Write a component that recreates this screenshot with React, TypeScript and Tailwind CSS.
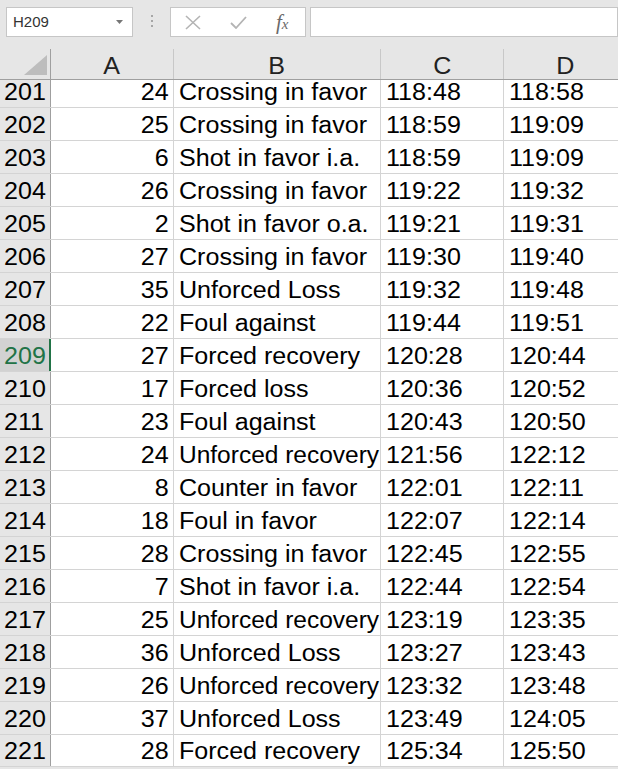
import React from "react";

type Row = { n: number; a: string; b: string; c: string; d: string };

const rows: Row[] = [
  { n: 201, a: "24", b: "Crossing in favor", c: "118:48", d: "118:58" },
  { n: 202, a: "25", b: "Crossing in favor", c: "118:59", d: "119:09" },
  { n: 203, a: "6", b: "Shot in favor i.a.", c: "118:59", d: "119:09" },
  { n: 204, a: "26", b: "Crossing in favor", c: "119:22", d: "119:32" },
  { n: 205, a: "2", b: "Shot in favor o.a.", c: "119:21", d: "119:31" },
  { n: 206, a: "27", b: "Crossing in favor", c: "119:30", d: "119:40" },
  { n: 207, a: "35", b: "Unforced Loss", c: "119:32", d: "119:48" },
  { n: 208, a: "22", b: "Foul against", c: "119:44", d: "119:51" },
  { n: 209, a: "27", b: "Forced recovery", c: "120:28", d: "120:44" },
  { n: 210, a: "17", b: "Forced loss", c: "120:36", d: "120:52" },
  { n: 211, a: "23", b: "Foul against", c: "120:43", d: "120:50" },
  { n: 212, a: "24", b: "Unforced recovery", c: "121:56", d: "122:12" },
  { n: 213, a: "8", b: "Counter in favor", c: "122:01", d: "122:11" },
  { n: 214, a: "18", b: "Foul in favor", c: "122:07", d: "122:14" },
  { n: 215, a: "28", b: "Crossing in favor", c: "122:45", d: "122:55" },
  { n: 216, a: "7", b: "Shot in favor i.a.", c: "122:44", d: "122:54" },
  { n: 217, a: "25", b: "Unforced recovery", c: "123:19", d: "123:35" },
  { n: 218, a: "36", b: "Unforced Loss", c: "123:27", d: "123:43" },
  { n: 219, a: "26", b: "Unforced recovery", c: "123:32", d: "123:48" },
  { n: 220, a: "37", b: "Unforced Loss", c: "123:49", d: "124:05" },
  { n: 221, a: "28", b: "Forced recovery", c: "125:34", d: "125:50" },
];

const ACTIVE_ROW = 209;

function Txt({
  children,
  origin = "left",
  tight = false,
}: {
  children: React.ReactNode;
  origin?: "left" | "right" | "center";
  tight?: boolean;
}) {
  const o = origin === "left" ? "origin-left" : origin === "right" ? "origin-right" : "origin-center";
  const s = tight ? "scale-x-[1.065]" : "scale-x-[1.09]";
  return <span className={`inline-block whitespace-nowrap ${s} ${o}`}>{children}</span>;
}

function FormulaBar() {
  return (
    <div className="flex h-[49px] items-start bg-[#e6e6e6] pt-[7px]">
      {/* name box */}
      <div className="ml-[6px] flex h-[30px] w-[127px] items-center justify-between border border-[#c6c6c6] bg-white pl-[6px] pr-[9px]">
        <span className="text-[15px] text-[#333]">H209</span>
        <svg width="7" height="4" viewBox="0 0 7 4">
          <path d="M0 0 L7 0 L3.5 4 Z" fill="#767676" />
        </svg>
      </div>
      {/* grip dots */}
      <div className="flex w-[37px] flex-col items-center gap-[3px] pt-[8px]">
        <span className="h-[2px] w-[2px] bg-[#a6a6a6]" />
        <span className="h-[2px] w-[2px] bg-[#a6a6a6]" />
        <span className="h-[2px] w-[2px] bg-[#a6a6a6]" />
      </div>
      {/* cancel / enter / function buttons */}
      <div className="flex h-[30px] w-[136px] items-center border border-[#c6c6c6] bg-white">
        <svg className="ml-[14px]" width="16" height="15" viewBox="0 0 16 15">
          <path d="M1 1 L15 14 M15 1 L1 14" stroke="#b4b4b4" strokeWidth="1.6" fill="none" />
        </svg>
        <svg className="ml-[29px]" width="17" height="13" viewBox="0 0 17 13">
          <path d="M1 7 L6 12 L16 1" stroke="#b4b4b4" strokeWidth="1.8" fill="none" />
        </svg>
        <span
          className="ml-[29px] text-[21px] italic leading-none text-[#6a6a6a]"
          style={{ fontFamily: '"Liberation Serif", "Times New Roman", serif' }}
        >
          f<span className="text-[15px]">x</span>
        </span>
      </div>
      {/* formula input */}
      <div className="ml-[4px] h-[30px] flex-1 border border-[#c6c6c6] bg-white" />
    </div>
  );
}

function ColumnHeader() {
  const cols: { label: string; w: string }[] = [
    { label: "A", w: "w-[123px]" },
    { label: "B", w: "w-[207px]" },
    { label: "C", w: "w-[123px]" },
    { label: "D", w: "w-[123px]" },
  ];
  return (
    <div className="flex h-[31px] border-b border-[#9f9f9f] bg-[#e6e6e6]">
      <div className="relative w-[51px] shrink-0 border-r border-[#9f9f9f]">
        <svg className="absolute left-[24px] top-[6px]" width="23" height="20" viewBox="0 0 23 20">
          <path d="M23 0 L23 20 L0 20 Z" fill="#bdbdbd" />
        </svg>
      </div>
      {cols.map((c) => (
        <div
          key={c.label}
          className={`${c.w} flex shrink-0 items-end justify-center border-r border-[#c8c8c8] text-[23px] leading-[26px] text-[#222]`}
        >
          <Txt origin="center">{c.label}</Txt>
        </div>
      ))}
    </div>
  );
}

function SheetRow({ r, idx }: { r: Row; idx: number }) {
  const h = idx === 0 ? "h-[28px]" : idx === rows.length - 1 ? "h-[32px]" : "h-[33px]";
  const active = r.n === ACTIVE_ROW;
  const cell = "flex shrink-0 items-end overflow-hidden border-r border-[#d4d4d4] pb-[4px]";
  return (
    <div className={`flex ${h} border-b border-[#d4d4d4] text-[23px] leading-[22px] text-black`}>
      <div
        className={
          active
            ? "flex w-[51px] shrink-0 items-end border-r-2 border-r-[#217346] bg-[#d2d2d2] pb-[4px] pl-[4px] text-[#217346]"
            : "flex w-[51px] shrink-0 items-end border-r border-[#9f9f9f] bg-[#e6e6e6] pb-[4px] pl-[4px] text-black"
        }
      >
        <Txt>{r.n}</Txt>
      </div>
      <div className={`${cell} w-[123px] justify-end pr-[4px]`}>
        <Txt origin="right">{r.a}</Txt>
      </div>
      <div className={`${cell} w-[207px] pl-[5px]`}>
        <Txt tight={r.b.length > 16 && r.b.startsWith("Unforced")}>{r.b}</Txt>
      </div>
      <div className={`${cell} w-[123px] pl-[5px]`}>
        <Txt>{r.c}</Txt>
      </div>
      <div className={`${cell} w-[123px] pl-[5px]`}>
        <Txt>{r.d}</Txt>
      </div>
    </div>
  );
}

export default function App() {
  return (
    <div
      className="h-[769px] w-[618px] overflow-hidden bg-[#e6e6e6]"
      style={{ fontFamily: '"Liberation Sans", Arial, sans-serif' }}
    >
      <FormulaBar />
      <ColumnHeader />
      <div className="bg-white">
        {rows.map((r, i) => (
          <SheetRow key={r.n} r={r} idx={i} />
        ))}
      </div>
    </div>
  );
}
